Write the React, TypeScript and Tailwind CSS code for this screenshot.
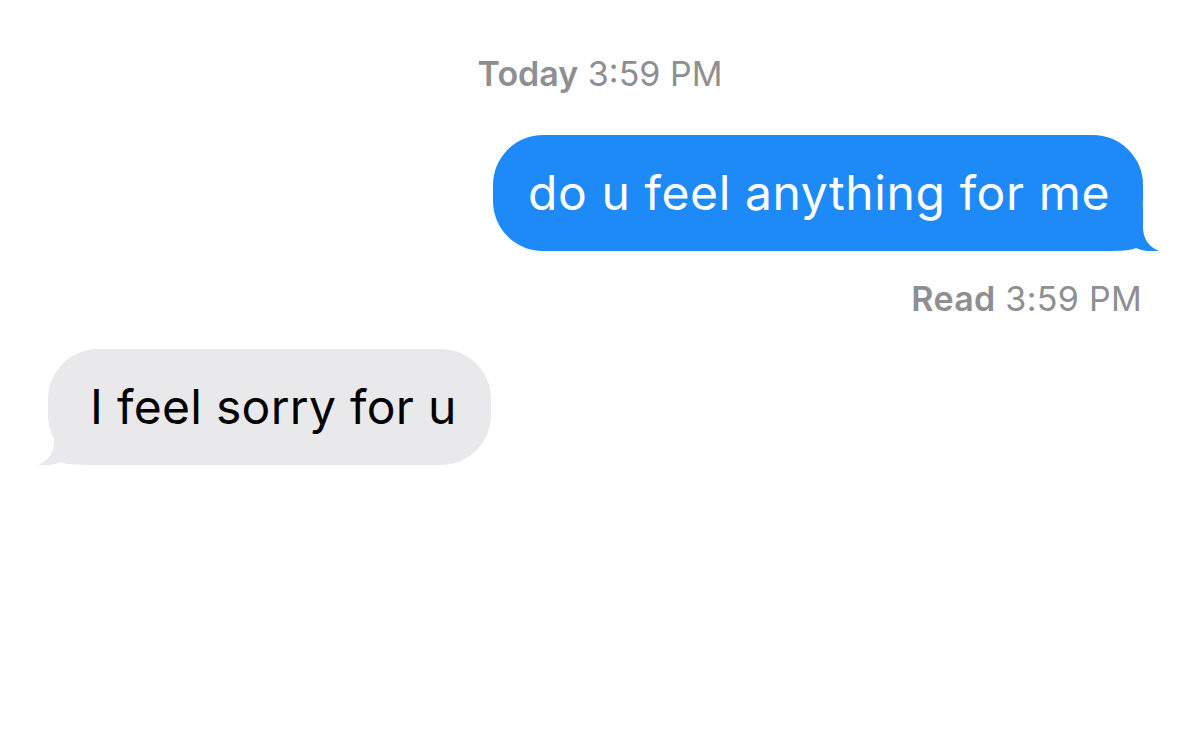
import React from 'react';

const font = { fontFamily: 'Inter, "Noto Sans", sans-serif' };

function TailRight() {
  return (
    <svg className="absolute bottom-0 right-[-16px]" width="70" height="46" viewBox="0 0 70 46" fill="#1e8af8">
      <path d="M4 0 H54 V22 C54 34 60 42 70 46 C62 47 54 46 47 43 C40 46 30 46 4 46 Z" />
    </svg>
  );
}

function TailLeft() {
  return (
    <svg className="absolute bottom-0 left-[-10px]" width="70" height="46" viewBox="0 0 70 46" fill="#e9e9eb">
      <path d="M66 0 H16 V22 C16 34 10 42 0 46 C8 47 16 46 23 43 C30 46 40 46 66 46 Z" />
    </svg>
  );
}

export default function App() {
  return (
    <div className="w-[1200px] h-[750px] bg-white flex flex-col" style={font}>
      <div className="pt-[54px] text-center text-[34px] leading-[40px] text-[#8e8e93]">
        <span className="font-semibold">Today</span> 3:59 PM
      </div>

      <div className="mt-[41px] flex justify-end pr-[57px]">
        <div className="relative h-[116px] rounded-[50px] bg-[#1e8af8] pl-[35px] pr-[33px] flex items-center">
          <TailRight />
          <span className="relative text-white text-[48px] leading-none tracking-[0.6px]">do u feel anything for me</span>
        </div>
      </div>

      <div className="mt-[28px] pr-[58px] text-right text-[34px] leading-[40px] text-[#8e8e93] tracking-[0.3px]">
        <span className="font-semibold">Read</span> 3:59 PM
      </div>

      <div className="mt-[30px] flex justify-start pl-[48px]">
        <div className="relative h-[116px] rounded-[50px] bg-[#e9e9eb] pl-[42px] pr-[34px] flex items-center">
          <TailLeft />
          <span className="relative text-black text-[48px] leading-none tracking-[0.3px]">I feel sorry for u</span>
        </div>
      </div>
    </div>
  );
}
